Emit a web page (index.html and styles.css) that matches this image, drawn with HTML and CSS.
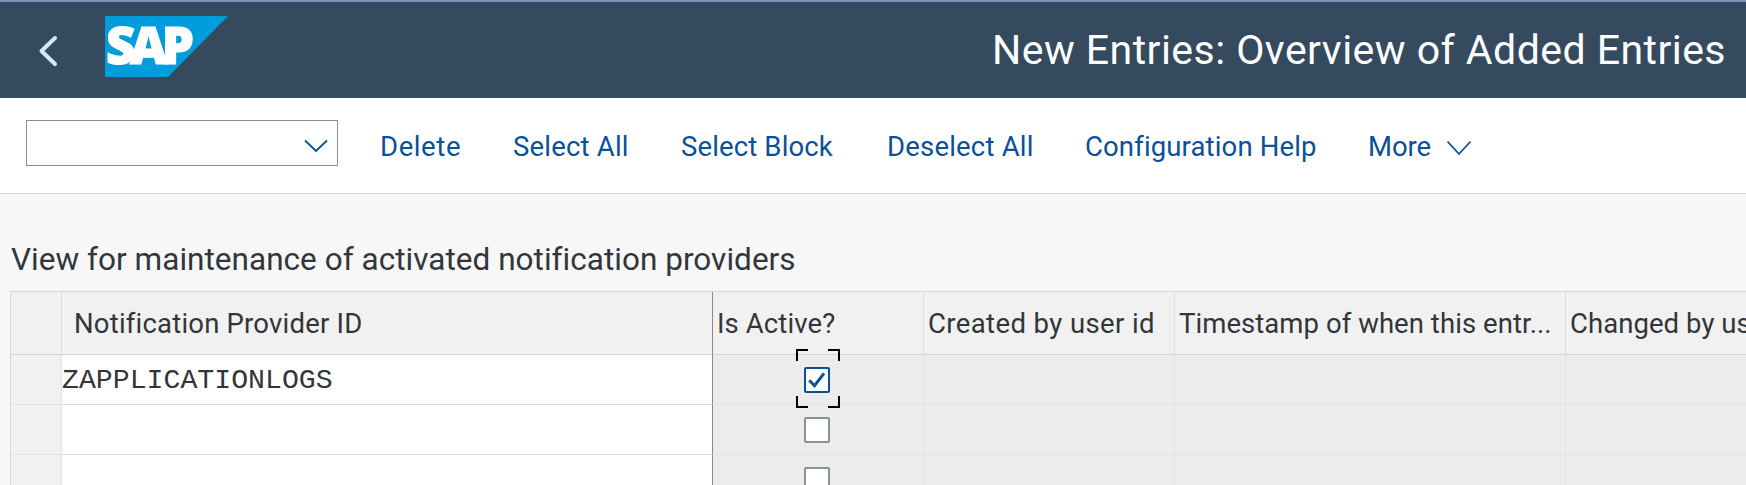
FILE: index.html
```
<!DOCTYPE html>
<html lang="en">
<head>
<meta charset="utf-8">
<title>New Entries: Overview of Added Entries</title>
<link rel="stylesheet" href="styles.css">
</head>
<body>
<header class="shell">
  <div class="shell-left">
    <svg class="back" width="20" height="32" viewBox="0 0 20 32"><path d="M17 3 3.500 16 17 29" /></svg>
    <svg class="logo" width="123" height="61" viewBox="0 0 123 61">
      <path d="M0 0H123L63 61H0Z" fill="#009ddc"/>
      <text x="1" y="48" textLength="88" lengthAdjust="spacing">SAP</text>
    </svg>
  </div>
  <h1 class="title">New Entries: Overview of Added Entries</h1>
</header>
<nav class="toolbar">
  <div class="select"><svg width="24" height="14" viewBox="0 0 24 14"><path d="M1 1.500 12 12 23 1.500"/></svg></div>
  <div class="actions">
    <span class="action wide">Delete</span>
    <span class="action mid">Select All</span>
    <span class="action">Select Block</span>
    <span class="action mid">Deselect All</span>
    <span class="action">Configuration Help</span>
    <span class="action more">More <svg width="26" height="16" viewBox="0 0 26 16"><path d="M1.500 1.500 13 14 24.500 1.500"/></svg></span>
  </div>
</nav>
<main class="content">
  <h2 class="subtitle">View for maintenance of activated notification providers</h2>
  <div class="table">
    <div class="row head">
      <div class="cell"></div>
      <div class="cell key">Notification Provider ID</div>
      <div class="cell active">Is Active?</div>
      <div class="cell created">Created by user id</div>
      <div class="cell stamp">Timestamp of when this entr...</div>
      <div class="cell changed">Changed by user id</div>
    </div>
    <div class="row">
      <div class="cell selector"></div>
      <div class="cell key">ZAPPLICATIONLOGS</div>
      <div class="cell check">
        <span class="box checked">
          <svg class="tick" width="18" height="18" viewBox="0 0 18 18"><path d="M1.300 9.300 6.500 14.700 16 2.300"/></svg>
          <svg class="focus" width="44" height="59" viewBox="0 0 44 59"><path d="M1 12V1H12M32 1H43V12M43 47V58H32M12 58H1V47"/></svg>
        </span>
      </div>
      <div class="cell"></div><div class="cell"></div><div class="cell"></div>
    </div>
    <div class="row">
      <div class="cell selector"></div><div class="cell key"></div>
      <div class="cell check"><span class="box"></span></div>
      <div class="cell"></div><div class="cell"></div><div class="cell"></div>
    </div>
    <div class="row">
      <div class="cell selector"></div><div class="cell key"></div>
      <div class="cell check"><span class="box"></span></div>
      <div class="cell"></div><div class="cell"></div><div class="cell"></div>
    </div>
  </div>
</main>
</body>
</html>
```
FILE: styles.css
```
* { box-sizing: border-box; }

body {
  margin: 0;
  height: 485px;
  overflow: hidden;
  background: #f7f7f7;
  color: #32363a;
  font: 27.5px/36px Roboto, "Noto Sans", sans-serif;
}

svg { display: block; fill: none; }

/* Shell header */
.shell {
  display: flex;
  justify-content: space-between;
  height: 98px;
  padding: 0 20px 0 38px;
  border-top: 2px solid #7996b6;
  background: #354a5f;
}
.shell-left { display: flex; align-items: flex-start; gap: 47px; padding-top: 14px; }
.back {
  margin-top: 19px;
  stroke: #d1e8ff;
  stroke-width: 4;
  stroke-linecap: round;
  stroke-linejoin: round;
}
.logo text {
  fill: #fff;
  stroke: #fff;
  stroke-width: 1.2px;
  font: 800 51px "Open Sans", sans-serif;
}
.title {
  margin: 0;
  padding-top: 22px;
  color: #fff;
  font-weight: 400;
  font-size: 41px;
  line-height: 52px;
  letter-spacing: 0.46px;
}

/* Toolbar */
.toolbar {
  display: flex;
  align-items: flex-start;
  gap: 42px;
  height: 96px;
  padding: 22px 0 0 26px;
  border-bottom: 1px solid #d5d5d5;
  background: #fff;
}
.select {
  display: flex;
  justify-content: flex-end;
  width: 312px;
  height: 46px;
  padding: 18px 9px 0 0;
  border: 1px solid #898d91;
}
.select svg, .more svg { stroke: #0a4e9b; stroke-width: 1.8; }
.actions {
  display: grid;
  grid-template-columns: 133px 168px 206px 198px 283px auto;
  padding-top: 9px;
  color: #0a509a;
  letter-spacing: 0.14px;
}
.action { white-space: nowrap; }
.wide { letter-spacing: 0.6px; }
.mid { letter-spacing: 0.2px; }
.more { display: flex; gap: 15px; letter-spacing: -0.1px; }
.more svg { margin-top: 11px; }

/* Table */
.content { padding: 46px 0 0 10px; }
.subtitle {
  margin: 0 0 11px 1px;
  font-weight: 400;
  font-size: 31.5px;
  line-height: 40px;
  letter-spacing: 0.03px;
}
.table {
  overflow: hidden;
  border-top: 1px solid #d5d5d5;
  border-left: 1px solid #d5d5d5;
}
.row {
  display: grid;
  grid-template-columns: 51px 651px 211px 251px 391px 1fr;
  height: 50px;
}
.cell {
  min-width: 0;
  overflow: hidden;
  padding-top: 6px;
  border-right: 1px solid #e3e3e3;
  border-bottom: 1px solid #e3e3e3;
  background: #ececec;
  white-space: nowrap;
}
.cell:last-child { border-right: 0; }
.key { border-right-color: #89898b; background: #fff; border-bottom-color: #dcdcdc; }
.selector { background: #f1f1f1; }
.row:not(.head) .key {
  padding-top: 7px;
  font: 28.2px/38px "Liberation Mono", monospace;
}
.row .check { display: flex; overflow: visible; padding: 12px 0 0 91px; }
.box {
  position: relative;
  width: 26px;
  height: 26px;
  border: 2px solid #89919a;
  border-radius: 2px;
  background: #fff;
}
.checked { border-color: #0a509a; }
.tick { margin: 2px; stroke: #0a509a; stroke-width: 3; }
.focus { position: absolute; top: -20px; left: -10px; stroke: #000; stroke-width: 2; }

.head { height: 63px; }
.head .cell {
  padding: 14px 0 0 4px;
  border-right-color: #dedede;
  border-bottom-color: #d3d3d3;
  background: #f1f1f1;
}
.head .key { padding-left: 12px; border-right-color: #89898b; letter-spacing: 0.2px; }
.active { letter-spacing: 0.1px; }
.created { letter-spacing: 0.4px; }
.stamp, .changed { letter-spacing: 0.06px; }
```
